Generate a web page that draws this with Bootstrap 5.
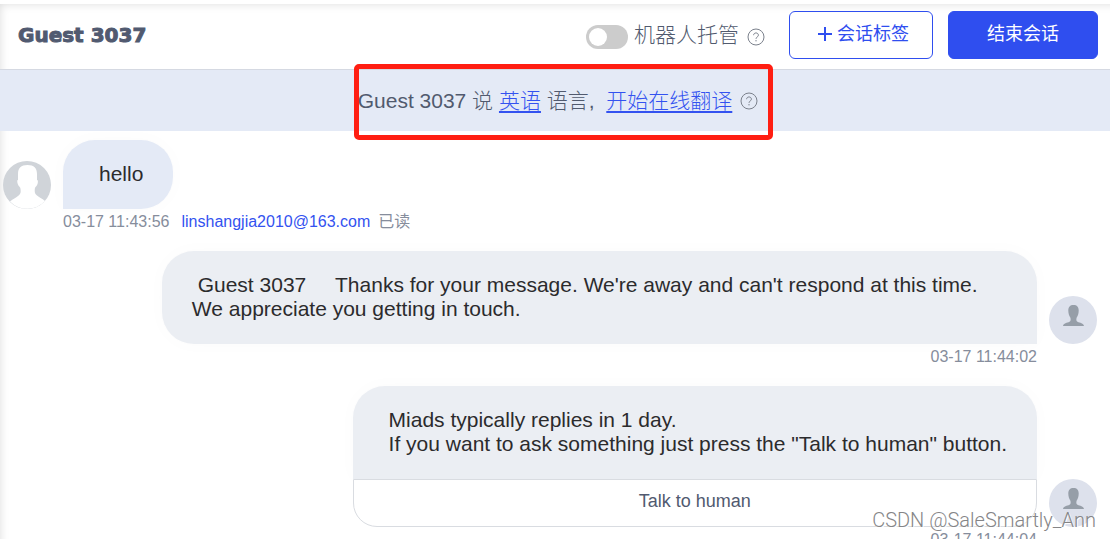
<!DOCTYPE html>
<html lang="zh-CN">
<head>
<meta charset="utf-8">
<meta name="viewport" content="width=device-width, initial-scale=1">
<title>Guest 3037</title>
<link href="https://cdn.jsdelivr.net/npm/bootstrap@5.3.0/dist/css/bootstrap.min.css" rel="stylesheet">
<style>
  body { font-family: "Liberation Sans", "Noto Sans CJK SC", sans-serif; color: #2b2b2d; font-size: 21px; line-height: 24px; }
  .chat-panel { box-shadow: inset 8px 8px 10px -8px rgba(0,0,0,.14); }
  .chat-header { height: 66px; border-bottom: 1px solid #d5d9e2; padding: 0 12px 0 18px; }
  .guest-title { font: 700 20px/24px "DejaVu Sans", sans-serif; color: #515a70; -webkit-text-stroke: 1px #515a70; }
  .host-label { color: #515a6e; font-weight: 300; margin-left: 6px; }
  .form-switch .form-check-input.host-switch { width: 42px; height: 24px; margin: 0; border: 0; background-color: #ccc;
    background-size: 24px 24px; background-position: left center;
    background-image: url("data:image/svg+xml,%3csvg xmlns='http://www.w3.org/2000/svg' viewBox='0 0 24 24'%3e%3ccircle cx='12' cy='12' r='9' fill='%23fff'/%3e%3c/svg%3e"); }
  .action-btn { height: 48px; border-radius: 6px; font-size: 18px; line-height: 24px; font-weight: 400; padding: 0 0 2px; }
  .btn-tag { --bs-btn-color: #2f4eef; --bs-btn-border-color: #2f4eef; width: 144px; padding-left: 4px; }
  .btn-end { --bs-btn-color: #fff; --bs-btn-bg: #2f4eef; --bs-btn-border-color: #2f4eef; width: 150px; margin-left: 15px; }
  .lang-bar { height: 61px; background: #e4eaf6; color: #515a6e; font-weight: 300; padding-left: 6px; }
  .lang-text { white-space: pre; }
  .lang-bar a, .mail-link { color: #3352f0; }
  .lang-bar a { text-underline-offset: 3px; text-decoration-thickness: 2px; }
  .highlight-frame { inset: -25px -15px -27px -4px; border: 5px solid #ff1e12; border-radius: 5px; pointer-events: none; }
  .messages { padding: 9px 13px 0 3px; }
  .bubble { padding: 22px 30px 23px 36px; background: #ebeef3; border-radius: 32px 32px 0 32px; box-shadow: 0 0 20px rgba(0,0,0,.02); white-space: pre-wrap; }
  .bubble-guest { background: #e4eaf6; border-radius: 32px 32px 32px 0; }
  .bubble-wide { padding-left: 30px; width: 80%; }
  .bubble-open { border-radius: 32px 32px 0 0; }
  .reply-btn { height: 48px; border: 1px solid #d9dce1; border-radius: 0 0 24px 24px; background: #fff; color: #515a70; font-size: 18px; padding-bottom: 6px; }
  .meta { font-size: 16px; line-height: 26px; color: #868d9c; }
  .meta-end { margin-right: 60px; }
  .gap-avatar { gap: 12px; }
  .watermark { right: 14px; bottom: 7px; color: #858587; font: 300 20px/24px Roboto, sans-serif; text-shadow: 1px 1px 0 #fff; }
</style>
</head>
<body>
<div class="vh-100 overflow-hidden position-relative pt-1">
  <main class="chat-panel h-100">
    <header class="chat-header d-flex align-items-center">
      <h1 class="guest-title mb-1 me-auto">Guest 3037</h1>
      <div class="form-check form-switch d-flex align-items-center p-0 m-0">
        <input class="form-check-input host-switch" type="checkbox" role="switch" id="host">
        <label class="host-label pb-1" for="host">机器人托管</label>
      </div>
      <svg class="ms-2 me-4" width="18" height="18" viewBox="0 0 18 18" fill="none" stroke="#7b818c"><circle cx="9" cy="9" r="8"/><path d="M6.6 7.2c0-3 4.8-3 4.8 0 0 1.8-2.4 1.8-2.4 3.6M9 12v1.4"/></svg>
      <button type="button" class="btn action-btn btn-tag d-flex align-items-center justify-content-center mb-1">
        <svg class="me-1" width="16" height="16" viewBox="0 0 16 16" stroke="currentColor" stroke-width="2"><path d="M8 1v14M1 8h14"/></svg>会话标签</button>
      <button type="button" class="btn action-btn btn-end mb-1">结束会话</button>
    </header>
    <div class="lang-bar d-flex align-items-center justify-content-center">
      <div class="position-relative d-flex align-items-center">
        <span class="lang-text">Guest 3037 说 <a href="#">英语</a> 语言,  <a href="#">开始在线翻译</a></span>
        <svg class="ms-2" width="18" height="18" viewBox="0 0 18 18" fill="none" stroke="#7b818c"><circle cx="9" cy="9" r="8"/><path d="M6.6 7.2c0-3 4.8-3 4.8 0 0 1.8-2.4 1.8-2.4 3.6M9 12v1.4"/></svg>
        <div class="highlight-frame position-absolute"></div>
      </div>
    </div>
    <section class="messages">
      <div class="d-flex align-items-end gap-avatar">
        <svg class="flex-shrink-0" width="48" height="48" viewBox="0 0 48 48"><circle cx="24" cy="24" r="24" fill="#d0d4d9"/><path fill="#fff" d="M15 13c0-6 3-9 9.500-9S34 7 34 13v6c1.500 0 1 4-.5 6-.8 1-1.500 1-1.700 3-.3 4 .2 5 2.200 6.500 2 1.500 5 3 8 5.500A24 24 0 0 1 7 40.500c3-2.500 6-4 8-5.500 2.500-2 3-3 2.500-7-.2-2-1-2-1.700-3-1.300-2-2.300-6-.8-6z"/></svg>
        <div class="bubble bubble-guest">hello</div>
      </div>
      <div class="meta d-flex gap-avatar ms-5 ps-1"><span class="ms-2">03-17 11:43:56</span><span><a class="mail-link text-decoration-none me-2" href="#">linshangjia2010@163.com</a>已读</span></div>

      <div class="d-flex align-items-end justify-content-end gap-avatar mt-3">
        <div class="bubble bubble-wide"> Guest 3037     Thanks for your message. We're away and can't respond at this time.
We appreciate you getting in touch.</div>
        <svg class="flex-shrink-0" width="48" height="48" viewBox="0 0 48 48"><circle cx="24" cy="24" r="24" fill="#dde1ec"/><path fill="#969ea8" d="M24.500 9c3.500 0 5.200 2 5.200 5.500 0 3.500-1 5.500-2 7-.5 1.500-.7 3.500.8 4.200 2.500 1.100 6 1.300 6.500 4.300H14c.5-3 4-3.200 6.500-4.300 1.500-.7 1.300-2.700.8-4.200-1-1.500-2-3.500-2-7C19.300 11 21 9 24.500 9z"/></svg>
      </div>
      <div class="meta meta-end text-end">03-17 11:44:02</div>

      <div class="d-flex align-items-end justify-content-end gap-avatar mt-3">
        <div class="d-flex flex-column">
          <div class="bubble bubble-open">Miads typically replies in 1 day.
If you want to ask something just press the "Talk to human" button.</div>
          <button type="button" class="reply-btn w-100">Talk to human</button>
        </div>
        <svg class="flex-shrink-0" width="48" height="48" viewBox="0 0 48 48"><circle cx="24" cy="24" r="24" fill="#dde1ec"/><path fill="#969ea8" d="M24.500 9c3.500 0 5.200 2 5.200 5.500 0 3.500-1 5.500-2 7-.5 1.500-.7 3.500.8 4.200 2.500 1.100 6 1.300 6.500 4.300H14c.5-3 4-3.200 6.500-4.300 1.500-.7 1.300-2.700.8-4.200-1-1.500-2-3.500-2-7C19.300 11 21 9 24.500 9z"/></svg>
      </div>
      <div class="meta meta-end text-end">03-17 11:44:04</div>
    </section>
  </main>
  <div class="watermark position-absolute">CSDN @SaleSmartly_Ann</div>
</div>
<script src="https://cdn.jsdelivr.net/npm/bootstrap@5.3.0/dist/js/bootstrap.bundle.min.js"></script>
</body>
</html>
